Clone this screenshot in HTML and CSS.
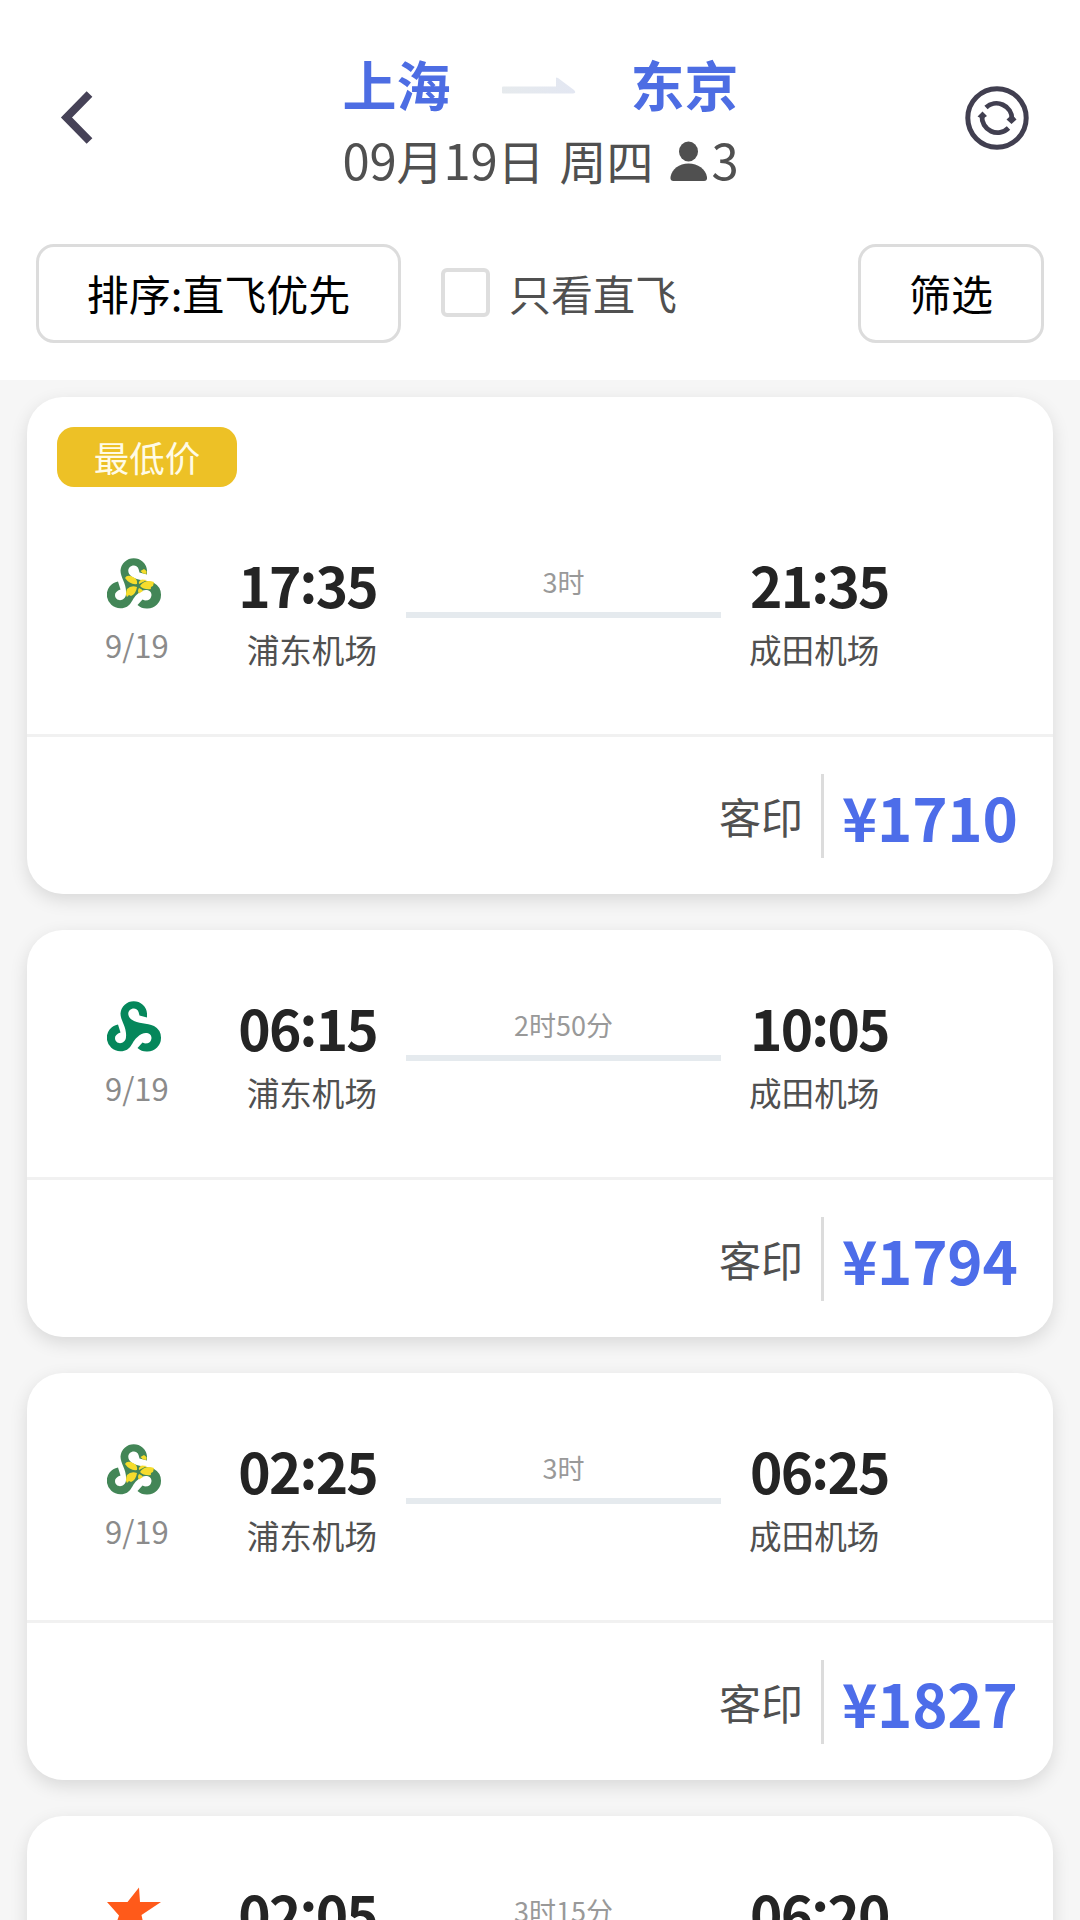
FILE: index.html
```html
<!DOCTYPE html>
<html lang="zh-CN">
<head>
    <meta charset="utf-8">
    <title>上海-东京 航班列表</title>
    <link rel="stylesheet" href="styles.css">
</head>
<body>
<!-- 航空公司图标 -->
<svg class="sprite" width="0" height="0">
    <defs>
        <path id="spring-shape" d="M40 17.500V13.500A13.300 13.300 0 0 0 13.500 13.500C13.500 21 20 27 19 37C18.500 45 8 45 8 38Q8 34.500 13.500 32.500L11 24.500A13.500 13.500 0 0 0 13.500 51.300C25 51 24 42 30.500 37C36 31 44.500 32 44.500 38C44 43.500 39 44.500 35.500 42.500L30.500 48A13.500 13.500 0 0 0 40.500 51.500A13.500 13.500 0 0 0 54 38A13.500 13.500 0 0 0 47 26C40 23 31 24 24.500 19.500C19 15.500 21 8.500 27 8.500Q31.500 8.500 32.500 15.500Z"/>
    </defs>
    <symbol id="spring" viewBox="0 0 54 52">
        <use href="#spring-shape" fill="#05875b"/>
    </symbol>
    <symbol id="spring-jp" viewBox="0 0 54 52">
        <use href="#spring-shape" fill="#438657"/>
        <g fill="#f6dc2c">
            <path d="M30 27Q23 28 18 21Q20 17 26 20Q31 22 30 27Z"/>
            <path d="M32 27Q31 24 35 22.500L40 23L36 25Z"/>
            <path d="M33.500 14L37 12L39.500 14V17L36 16.500Z"/>
            <path d="M33 29Q38 22 47 25L46 29Q43 30 44 32Q37 33 33 29Z"/>
            <path d="M32 31Q35 32 36 34L32 36.500Q30 34 32 31Z"/>
            <path d="M30 30Q29 37 24 39L22 38L20 40Q18 37 20 32Q24 28 30 30Z"/>
        </g>
    </symbol>
    <symbol id="jetstar" viewBox="0 0 54 52">
        <path fill="#ff5a1a" d="M0 16H20.500L32 1.500L33 16H54L34.500 29L39 50L22 38L5 50L12 29.500Z"/>
    </symbol>
</svg>

<header class="header">
    <div class="nav">
        <svg class="back" viewBox="0 0 34 56"><path d="M29.500 4L6.500 27.500L29.500 51" fill="none" stroke="#464257" stroke-width="8"/></svg>
        <div class="route">
            <div class="cities">
                <span>上海</span>
                <svg class="arrow" viewBox="0 0 74 18">
                    <defs><linearGradient id="fade"><stop offset="0" stop-color="#e6eaed"/><stop offset="1" stop-color="#e3e7f2"/></linearGradient></defs>
                    <path d="M0 10.500Q0 9.500 1 9.500H54V1Q54 0 56 1L72 13Q75 16.500 71 16.500H1Q0 16.500 0 15.500Z" fill="url(#fade)"/>
                </svg>
                <span>东京</span>
            </div>
            <div class="trip">
                <span><em>09</em>月<em>19</em>日</span><span class="week">周四</span>
                <svg class="person" viewBox="0 0 38 41"><ellipse cx="18.500" cy="10.500" rx="9.500" ry="10"/><path d="M3.500 40Q0 40 .5 36C2 28 9 22.500 18.500 22.500S35.500 28 37 36Q37.500 40 34 40Z"/></svg>
                <span><em>3</em></span>
            </div>
        </div>
        <svg class="refresh" viewBox="0 0 64 64" fill="none" stroke="#413f50">
            <circle cx="32" cy="32" r="29.200" stroke-width="5"/>
            <g stroke-width="4.800">
                <path d="M21 21.500A15.500 15.500 0 0 1 47 33"/>
                <path d="M43.500 42A15.500 15.500 0 0 1 17 30"/>
            </g>
            <path d="M47 28.500L51.500 33.500L46.500 38L41.500 33.500ZM17.500 25.500L22 30L17.500 33L12.500 30.500Z" fill="#413f50" stroke="none"/>
        </svg>
    </div>
    <div class="filters">
        <button class="btn sort">排序:直飞优先</button>
        <label class="direct"><i class="box"></i>只看直飞</label>
        <button class="btn filter">筛选</button>
    </div>
</header>

<main class="list">
    <section class="card">
        <div class="tag-row"><span class="tag">最低价</span></div>
        <div class="flight">
            <div class="airline"><svg><use href="#spring-jp"/></svg><p>9/19</p></div>
            <div class="place depart"><b>17<i>:</i>35</b><p>浦东机场</p></div>
            <div class="duration">3时</div>
            <div class="place"><b>21<i>:</i>35</b><p>成田机场</p></div>
        </div>
        <div class="fare"><span class="agent">客印</span><span class="price">¥1710</span></div>
    </section>

    <section class="card">
        <div class="flight">
            <div class="airline"><svg><use href="#spring"/></svg><p>9/19</p></div>
            <div class="place depart"><b>06<i>:</i>15</b><p>浦东机场</p></div>
            <div class="duration">2时50分</div>
            <div class="place"><b>10<i>:</i>05</b><p>成田机场</p></div>
        </div>
        <div class="fare"><span class="agent">客印</span><span class="price">¥1794</span></div>
    </section>

    <section class="card">
        <div class="flight">
            <div class="airline"><svg><use href="#spring-jp"/></svg><p>9/19</p></div>
            <div class="place depart"><b>02<i>:</i>25</b><p>浦东机场</p></div>
            <div class="duration">3时</div>
            <div class="place"><b>06<i>:</i>25</b><p>成田机场</p></div>
        </div>
        <div class="fare"><span class="agent">客印</span><span class="price">¥1827</span></div>
    </section>

    <section class="card">
        <div class="flight">
            <div class="airline"><svg><use href="#jetstar"/></svg></div>
            <div class="place depart"><b>02<i>:</i>05</b></div>
            <div class="duration">3时15分</div>
            <div class="place"><b>06<i>:</i>20</b></div>
        </div>
    </section>
</main>
</body>
</html>
```

FILE: styles.css
```css
*{box-sizing:border-box;}
body,p{margin:0;padding:0;}
i,em{font-style:normal;}
svg{display:block;}
body{
    width:1080px;height:1920px;overflow:hidden;
    display:flex;flex-direction:column;
    background:#f6f6f6;color:#505050;
    font-family:"Noto Sans CJK SC",sans-serif;
}
.sprite{position:absolute;}

/* 顶部导航 */
.header{
    flex:none;height:380px;
    padding:54px 36px 0;
    background:#fff;
}
.nav{
    height:190px;
    display:flex;justify-content:space-between;align-items:flex-start;
    padding:0 15px 0 24px;
}
.back{width:34px;height:56px;margin-top:36px;}
.refresh{width:64px;height:64px;margin-top:32px;}
.route{width:396px;margin-left:22px;}
.cities{
    display:flex;justify-content:space-between;align-items:center;
    height:60px;
    font-size:54px;line-height:64px;font-weight:700;color:#4d6de3;
}
.arrow{width:74px;height:18px;margin:4px 4px 0 0;}
.trip{
    display:flex;align-items:center;
    height:60px;margin-top:16px;
    font-size:47px;line-height:60px;white-space:nowrap;
}
.trip em{font-size:49px;line-height:1;letter-spacing:-.2px;}
.week{margin-left:15px;}
.person{flex:none;width:38px;height:41px;margin:2px 4px 0 16px;fill:#505050;}

/* 排序与筛选 */
.filters{display:flex;align-items:center;height:99px;}
.btn{
    height:99px;padding:0 0 2px;
    border:3px solid #dcdcdc;border-radius:18px;
    background:#fff;color:#000;
    font:400 42px/60px "Noto Sans CJK SC",sans-serif;
}
.sort{width:365px;}
.filter{width:186px;margin-left:auto;}
.direct{
    display:flex;align-items:center;
    margin:-2px 0 0 40px;
    font-size:42px;line-height:60px;
}
.box{
    width:49px;height:49px;margin-right:19px;
    border:4px solid #dedede;border-radius:6px;
}

/* 航班列表 */
.list{
    display:flex;flex-direction:column;gap:36px;
    padding:17px 27px 0;
    flex:1;overflow:hidden;
}
.card{
    flex:none;
    background:#fff;border-radius:36px;
    box-shadow:0 6px 18px rgba(0,0,0,.12);
}
.tag-row{height:90px;padding:30px 30px 0;}
.tag{
    display:block;width:180px;height:60px;
    border-radius:17px;background:#edc126;color:#fffbe6;
    font-size:35.500px;line-height:60px;text-align:center;
}
.flight{
    display:grid;
    grid-template-columns:124px 141px 315px 160px;
    column-gap:29px;
    height:250px;padding:66px 0 0 56px;
    border-bottom:3px solid #f1f1f1;
}
.airline{padding:4px 0 0 24px;}
.airline svg{width:54px;height:52px;}
.airline p{
    margin:16px 0 0 -2px;
    font-size:31px;line-height:40px;color:#8b8b8b;
}
.place b{
    display:block;height:60px;
    font-size:55px;line-height:63px;letter-spacing:-1.800px;white-space:nowrap;
    color:#242424;
}
.place b i{position:relative;top:-5px;}
.place p{
    margin:16px 0 0 -1px;
    font-size:32.600px;line-height:40px;white-space:nowrap;
}
.depart{text-align:right;}
.duration{
    height:65px;padding-top:13px;
    border-bottom:6px solid #e5eaee;
    font-size:27px;line-height:32px;text-align:center;color:#999;
}
.fare{
    display:flex;justify-content:flex-end;align-items:center;
    height:157px;padding-right:35px;
}
.agent{
    height:84px;padding-right:18px;
    border-right:3px solid #dcdcdc;
    font-size:42px;line-height:83px;
}
.price{
    width:176px;margin-left:18px;
    font-size:60px;line-height:80px;font-weight:700;color:#4d6de9;
    letter-spacing:-.3px;
}
```
